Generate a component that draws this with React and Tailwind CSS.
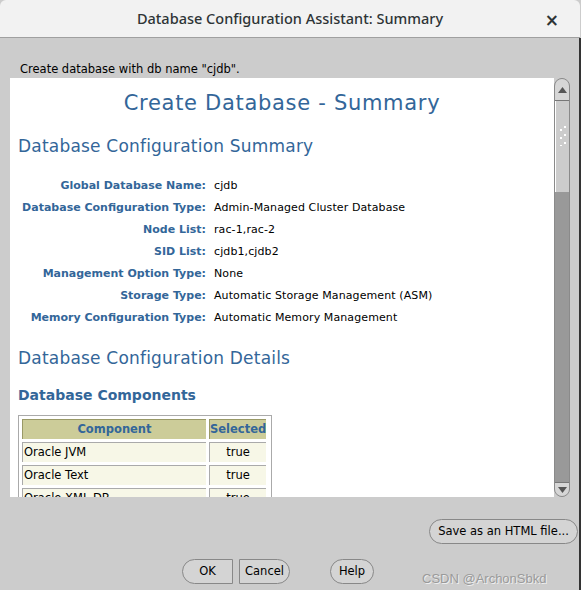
import React from "react";

const rows = [
  ["Global Database Name:", "cjdb"],
  ["Database Configuration Type:", "Admin-Managed Cluster Database"],
  ["Node List:", "rac-1,rac-2"],
  ["SID List:", "cjdb1,cjdb2"],
  ["Management Option Type:", "None"],
  ["Storage Type:", "Automatic Storage Management (ASM)"],
  ["Memory Configuration Type:", "Automatic Memory Management"],
];

const components = [
  ["Oracle JVM", "true"],
  ["Oracle Text", "true"],
  ["Oracle XML DB", "true"],
];

const Scrollbar = () => (
  <div className="w-4 flex flex-col bg-[#999999] border border-[#8a8a8a] rounded-t-lg rounded-b-lg overflow-hidden">
    {/* up arrow */}
    <div className="h-[22px] bg-[#d6d6d6] flex items-center justify-center border-b border-[#777]">
      <svg width="9" height="6" viewBox="0 0 9 6">
        <path d="M0 6 L4.5 0 L9 6 Z" fill="#555" />
      </svg>
    </div>
    {/* thumb */}
    <div className="h-[91px] bg-[#cccccc] border-l border-white flex items-start justify-center pt-[25px]">
      <svg width="8" height="20" viewBox="0 0 8 20">
        {[0, 8, 16].map((y) => (
          <rect key={"a" + y} x="5" y={y} width="2" height="2" fill="#fff" />
        ))}
        {[4, 12, 20].map((y) => (
          <rect key={"b" + y} x="1" y={y - 1} width="2" height="2" fill="#fff" />
        ))}
      </svg>
    </div>
    <div className="flex-1" />
    {/* down arrow */}
    <div className="h-[14px] bg-[#d6d6d6] flex items-center justify-center border-t border-[#777]">
      <svg width="9" height="6" viewBox="0 0 9 6">
        <path d="M0 0 L4.5 6 L9 0 Z" fill="#555" />
      </svg>
    </div>
  </div>
);

export default function App() {
  return (
    <div
      className="w-[581px] h-[590px] bg-[#cccccc] flex flex-col overflow-hidden relative"
      style={{ fontFamily: '"DejaVu Sans", sans-serif' }}
    >
      {/* Title bar */}
      <div className="h-[38px] shrink-0 bg-[#f2f2f2] border-b border-[#a0a0a0] rounded-t-[6px] flex items-center justify-center relative mr-[1px]">
        <span
          className="text-[14.5px] font-medium text-[#2e3436]"
          style={{ fontFamily: '"Noto Sans", sans-serif' }}
        >
          Database Configuration Assistant: Summary
        </span>
        <span className="absolute right-[21px] top-[8px] text-[17px] font-bold text-[#2e3436]">
          ×
        </span>
      </div>

      <div className="flex-1 flex flex-col border-r-2 border-[#333] mr-0">
        {/* Message */}
        <div className="pl-[20px] pt-[24px] h-[40px] text-[11.5px] text-black leading-[14px]">
          Create database with db name "cjdb".
        </div>

        {/* Content panel */}
        <div className="flex ml-[10px] mr-[9px] h-[419px]">
          <div className="flex-1 bg-white overflow-hidden">
            <h1 className="text-center text-[21px] text-[#336699] pt-[12px] leading-[26px] tracking-[0.7px]">
              Create Database - Summary
            </h1>
            <h2 className="pl-[8px] pt-[19px] text-[17px] text-[#336699] leading-[22px] tracking-[0.2px]">
              Database Configuration Summary
            </h2>
            <div className="pt-[18px] flex flex-col">
              {rows.map(([k, v]) => (
                <div key={k} className="flex h-[22px] items-center text-[11px] whitespace-nowrap">
                  <span className="w-[196px] text-right font-bold text-[#336699] shrink-0">
                    {k}
                  </span>
                  <span className="pl-[8px] text-black tracking-[0.1px]">{v}</span>
                </div>
              ))}
            </div>
            <h2 className="pl-[8px] pt-[18px] text-[17px] text-[#336699] leading-[22px] tracking-[0.2px]">
              Database Configuration Details
            </h2>
            <h3 className="pl-[8px] pt-[16px] text-[14px] font-bold text-[#336699] leading-[20px]">
              Database Components
            </h3>
            <div className="ml-[8px] mt-[10px] w-[254px] border border-[#aaaaaa] pt-[3px] pl-[3px] pb-[3px]">
              <table className="border-separate border-spacing-[3px] -m-[3px] text-[11.5px]">
                <thead>
                  <tr>
                    <th className="w-[184px] h-[20px] bg-[#cccc99] text-[#336699] font-bold text-center border-t border-l border-[#999966] p-0">
                      Component
                    </th>
                    <th className="w-[57px] h-[20px] bg-[#cccc99] text-[#336699] font-bold text-center border-t border-l border-[#999966] p-0">
                      Selected
                    </th>
                  </tr>
                </thead>
                <tbody>
                  {components.map(([c, s]) => (
                    <tr key={c}>
                      <td className="h-[20px] bg-[#f7f7e7] text-black border-t border-l border-[#aaaaaa] p-0 pl-[1px]">
                        {c}
                      </td>
                      <td className="h-[20px] bg-[#f7f7e7] text-black text-center border-t border-l border-[#aaaaaa] p-0">
                        {s}
                      </td>
                    </tr>
                  ))}
                </tbody>
              </table>
            </div>
          </div>
          <Scrollbar />
        </div>

        {/* Save button */}
        <div className="flex justify-end pr-[1px] pt-[22px]">
          <button className="h-[25px] w-[149px] text-[11.5px] text-black bg-[#d4d4d4] border border-[#888] rounded-full">
            Save as an HTML file...
          </button>
        </div>

        {/* Bottom buttons */}
        <div className="flex items-center pt-[11px] pl-[182px]">
          <button className="h-[25px] w-[51px] text-[11.5px] text-black bg-[#d4d4d4] border border-[#888] rounded-l-full">
            OK
          </button>
          <button className="ml-[6px] h-[25px] w-[51px] text-[11.5px] text-black bg-[#d4d4d4] border border-[#888] rounded-r-full">
            Cancel
          </button>
          <button className="ml-[40px] h-[25px] w-[44px] text-[11.5px] text-black bg-[#d4d4d4] border border-[#888] rounded-full">
            Help
          </button>
          <span
            className="ml-[48px] text-[13px] text-[#9a9a9a] mt-[14px]"
            style={{ fontFamily: '"Liberation Sans", sans-serif', textShadow: "1px 1px 0 #eee" }}
          >
            CSDN @ArchonSbkd
          </span>
        </div>
      </div>
    </div>
  );
}
